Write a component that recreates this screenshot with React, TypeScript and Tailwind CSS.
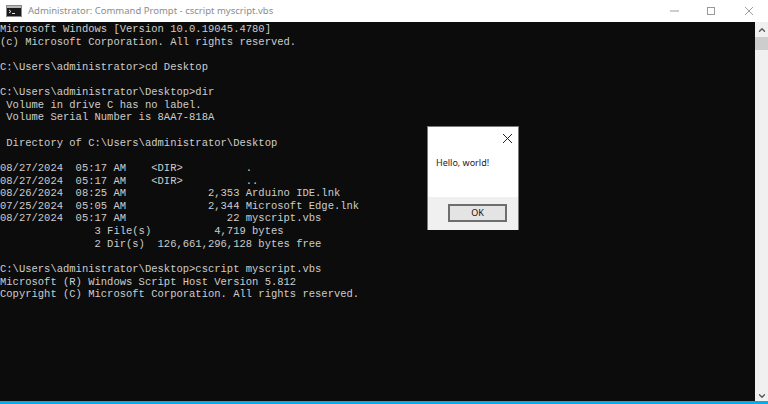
import { ChevronUp, ChevronDown } from 'lucide-react';

const lines = [
  'Microsoft Windows [Version 10.0.19045.4780]',
  '(c) Microsoft Corporation. All rights reserved.',
  '',
  'C:\\Users\\administrator>cd Desktop',
  '',
  'C:\\Users\\administrator\\Desktop>dir',
  ' Volume in drive C has no label.',
  ' Volume Serial Number is 8AA7-818A',
  '',
  ' Directory of C:\\Users\\administrator\\Desktop',
  '',
  '08/27/2024  05:17 AM    <DIR>          .',
  '08/27/2024  05:17 AM    <DIR>          ..',
  '08/26/2024  08:25 AM             2,353 Arduino IDE.lnk',
  '07/25/2024  05:05 AM             2,344 Microsoft Edge.lnk',
  '08/27/2024  05:17 AM                22 myscript.vbs',
  '               3 File(s)          4,719 bytes',
  '               2 Dir(s)  126,661,296,128 bytes free',
  '',
  'C:\\Users\\administrator\\Desktop>cscript myscript.vbs',
  'Microsoft (R) Windows Script Host Version 5.812',
  'Copyright (C) Microsoft Corporation. All rights reserved.',
];

function CmdIcon() {
  return (
    <svg width="16" height="12" viewBox="0 0 16 12" className="shrink-0">
      <rect x="0.5" y="0.5" width="15" height="11" fill="#1a1a1a" stroke="#8a8a8a" />
      <rect x="1" y="1" width="14" height="2" fill="#b9b9b9" />
      <path d="M3 5l2 1.5L3 8M6 8.5h3" stroke="#e6e6e6" fill="none" />
    </svg>
  );
}

function MessageBox() {
  return (
    <div className="absolute left-[427px] top-[126px] w-[92px] h-[104px] bg-white border border-[#7a7a7a] border-b-0 flex flex-col font-['Noto_Sans',sans-serif]">
      <div className="flex justify-end pt-[6px] pr-[5px]">
        <svg width="11" height="11" viewBox="0 0 11 11">
          <path d="M1 1l9 9M10 1l-9 9" stroke="#222" strokeWidth="1" fill="none" />
        </svg>
      </div>
      <div className="flex-1 pl-[8px] pt-[13px] text-[9px] leading-[12px] text-[#1a1a2a]">Hello, world!</div>
      <div className="h-[33px] bg-[#f0f0f0] flex justify-end pr-[11px] pt-[7px]">
        <div className="w-[59px] h-[18px] bg-[#e4e4e4] border-2 border-[#6e6e6e] flex items-center justify-center text-[9px] text-[#111]">OK</div>
      </div>
    </div>
  );
}

export default function App() {
  return (
    <div className="relative w-[768px] h-[404px] overflow-hidden bg-white flex flex-col">
      <div className="h-[22px] shrink-0 flex items-center bg-white pl-[6px]">
        <CmdIcon />
        <span className="ml-[6px] text-[9.5px] text-[#8c8c8c] font-['Noto_Sans',sans-serif]">Administrator: Command Prompt - cscript  myscript.vbs</span>
        <div className="ml-auto flex items-center">
          <svg width="10" height="10" viewBox="0 0 10 10" className="mr-[27px]"><path d="M1 5h9" stroke="#9a9a9a" /></svg>
          <svg width="10" height="10" viewBox="0 0 10 10" className="mr-[28px]"><rect x="1.5" y="1.5" width="7" height="7" fill="none" stroke="#9a9a9a" /></svg>
          <svg width="10" height="10" viewBox="0 0 10 10" className="mr-[14px]"><path d="M1 1l8 8M9 1l-8 8" stroke="#a0a0a0" /></svg>
        </div>
      </div>
      <div className="flex flex-1 min-h-0">
        <div className="flex-1 bg-[#0c0c0c] pt-[1px] overflow-hidden">
          <pre className="font-['Liberation_Mono',monospace] text-[10.5px] leading-[12.63px] text-[#cccccc] font-normal">
            {lines.join('\n')}
          </pre>
        </div>
        <div className="w-[13px] bg-[#f0f0f0] flex flex-col items-center">
          <ChevronUp size={10} strokeWidth={3} className="text-[#555] mt-[3px]" />
          <div className="w-full h-[13px] bg-[#cdcdcd] mt-[2px]" />
          <ChevronDown size={10} strokeWidth={3} className="text-[#555] mt-auto" />
        </div>
      </div>
      <div className="h-[3px] shrink-0 bg-[#00adef]" />
      <MessageBox />
    </div>
  );
}
